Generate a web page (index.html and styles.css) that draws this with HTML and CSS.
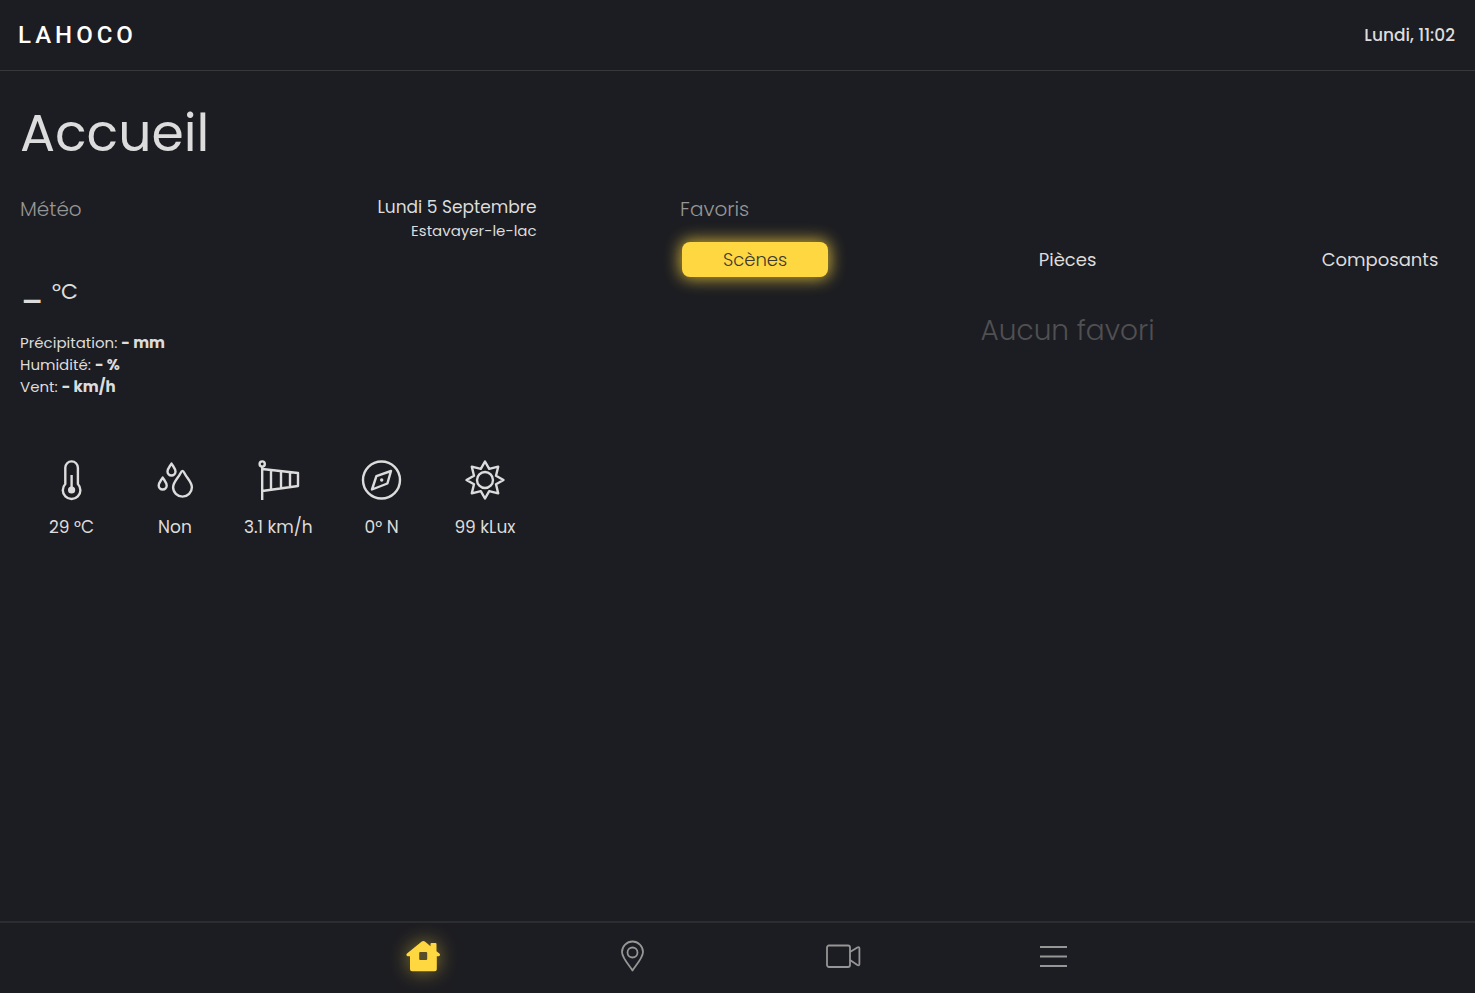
FILE: index.html
```html
<!DOCTYPE html>
<html lang="fr">
<head>
    <meta charset="UTF-8">
    <meta name="viewport" content="width=device-width, initial-scale=1.0">
    <title>Lahoco - Accueil</title>
    <link rel="stylesheet" href="styles.css">
</head>
<body>
<header class="topbar">
    <div class="logo">LAHOCO</div>
    <div class="clock">Lundi, 11:02</div>
</header>

<main>
    <h1>Accueil</h1>

    <div class="columns">
        <section class="weather">
            <div class="weather-head">
                <h2>Météo</h2>
                <div class="place">
                    <p class="date">Lundi 5 Septembre</p>
                    <p class="city">Estavayer-le-lac</p>
                </div>
            </div>

            <div class="temperature">
                <span class="degrees">_</span>
                <span class="unit">°C</span>
            </div>

            <ul class="details">
                <li>Précipitation: <b>- mm</b></li>
                <li>Humidité: <b>- %</b></li>
                <li>Vent: <b>- km/h</b></li>
            </ul>

            <div class="sensors">
                <div class="sensor">
                    <svg viewBox="0 0 40 40">
                        <path d="M13.3 24V7.700a6.300 6.300 0 0 1 12.600 0V24a8.800 8.800 0 1 1-12.600 0z"/>
                        <path d="M19.600 15v15"/>
                        <circle class="full" cx="19.600" cy="30" r="3.600"/>
                    </svg>
                    <span>29 °C</span>
                </div>
                <div class="sensor">
                    <svg viewBox="0 0 40 40">
                        <path d="M16.500 3.500c2 3.300 4 5.500 4 8a4 4 0 0 1-8 0c0-2.500 2-4.700 4-8z"/>
                        <path d="M7.700 17.500c2 3.300 4 5.500 4 8a4 4 0 0 1-8 0c0-2.500 2-4.700 4-8z"/>
                        <path d="M27.500 11c-1 0-1.500 1.200-2 2.200-2.500 5-7.400 9-7.400 14a9.400 9.400 0 0 0 18.800 0c0-5-4.900-9-7.400-14-.5-1-1-2.200-2-2.200z"/>
                    </svg>
                    <span>Non</span>
                </div>
                <div class="sensor">
                    <svg viewBox="0 0 40 40">
                        <circle cx="4.200" cy="4" r="2.600"/>
                        <path d="M4.200 6.600V40M4.200 9L40 13v13L4.200 31M13 10v20M23 11.200v17.300M32 12.200v15"/>
                    </svg>
                    <span>3.1 km/h</span>
                </div>
                <div class="sensor">
                    <svg viewBox="0 0 40 40">
                        <circle cx="19.500" cy="20" r="18.500"/>
                        <path d="M29 11l-3.600 12.500L10 29.500l4.400-13.300z"/>
                        <circle class="full" cx="19.700" cy="20" r="1.700"/>
                    </svg>
                    <span>0° N</span>
                </div>
                <div class="sensor">
                    <svg viewBox="0 0 40 40">
                        <circle cx="20" cy="20" r="8"/>
                        <path d="M20 1.500l4.200 7.400 9-2.200-2.200 9 7.500 4.300-7.500 4.300 2.200 9-9-2.200-4.200 7.400-4.200-7.400-9 2.200 2.200-9L1.500 20 9 15.700l-2.200-9 9 2.200z"/>
                    </svg>
                    <span>99 kLux</span>
                </div>
            </div>
        </section>

        <section class="favorites">
            <h2>Favoris</h2>
            <div class="tabs">
                <button type="button" class="tab active">Scènes</button>
                <button type="button" class="tab">Pièces</button>
                <button type="button" class="tab">Composants</button>
            </div>
            <p class="empty">Aucun favori</p>
        </section>
    </div>
</main>

<nav class="bottombar">
    <div class="links">
        <a href="#accueil" class="active" aria-label="Accueil">
            <svg viewBox="0 0 36 36">
                <path class="house" d="M17.800 3.600a2.300 2.300 0 0 1 3.100 0l5.600 4.600V6a1 1 0 0 1 1-1h4a1 1 0 0 1 1 1v7.200l2.900 2.400a1.500 1.500 0 0 1-1 2.700h-1.600v13a2 2 0 0 1-2 2H8a2 2 0 0 1-2-2v-13H4a1.500 1.500 0 0 1-1-2.700z"/>
                <rect class="window" x="15.200" y="14" width="8" height="8" rx="1"/>
            </svg>
        </a>
        <a href="#pieces" aria-label="Pièces">
            <svg viewBox="0 0 36 36">
                <path d="M18.500 32.500c-2-3.500-10.500-12.500-10.500-18.500a10.500 10.500 0 0 1 21 0C29 20 20.500 29 18.500 32.500z"/>
                <circle cx="18.500" cy="14.500" r="5"/>
            </svg>
        </a>
        <a href="#cameras" aria-label="Caméras">
            <svg viewBox="0 0 36 36">
                <rect x="2" y="7.500" width="23" height="21.500" rx="2"/>
                <path d="M25 14l7.400-4.500q2-1 2 1v15.500q0 2-2 1L25 22"/>
            </svg>
        </a>
        <a href="#menu" aria-label="Menu">
            <svg viewBox="0 0 36 36">
                <path d="M5 9h27M5 18.500h27M5 28h27"/>
            </svg>
        </a>
    </div>
</nav>
</body>
</html>
```
FILE: styles.css
```css
* {
    box-sizing: border-box;
}

body {
    min-height: 100vh;
    margin: 0;
    display: flex;
    flex-direction: column;
    background-color: #1c1d22;
    color: #dcdcdc;
    font-family: Poppins, Inter, sans-serif;
    font-size: 18px;
}

h1, h2, p, ul {
    margin: 0;
    padding: 0;
}

/* Top bar */
.topbar {
    display: flex;
    justify-content: space-between;
    align-items: center;
    height: 71px;
    padding: 0 20px 0 18px;
    border-bottom: 1px solid #383838;
}

.logo {
    font-family: Roboto, sans-serif;
    font-size: 24px;
    font-weight: 500;
    letter-spacing: 4px;
    color: #fff;
}

.clock {
    font-size: 17px;
    font-weight: 500;
}

main {
    flex: 1;
    padding: 28px 20px;
}

h1 {
    font-size: 52px;
    font-weight: 400;
    line-height: 68px;
}

h2 {
    font-size: 20px;
    font-weight: 300;
    line-height: 24px;
    color: #969696;
}

.columns {
    display: grid;
    grid-template-columns: 36% 54%;
    justify-content: space-between;
    margin-top: 30px;
}

/* Weather */
.weather-head {
    display: flex;
    justify-content: space-between;
}

.place {
    text-align: right;
}

.date {
    font-size: 17px;
    line-height: 20px;
}

.city {
    font-size: 15px;
    line-height: 28px;
}

.temperature {
    display: flex;
    align-items: baseline;
    gap: 8px;
    margin-top: 22px;
    line-height: 44px;
}

.degrees {
    font-size: 30px;
    font-weight: 500;
}

.unit {
    font-size: 22px;
}

.details {
    margin-top: 18px;
    list-style: none;
    font-size: 15px;
    line-height: 22px;
}

.sensors {
    display: grid;
    grid-template-columns: repeat(5, 1fr);
    margin-top: 62px;
}

.sensor {
    display: flex;
    flex-direction: column;
    align-items: center;
    gap: 16px;
    font-size: 17px;
    line-height: 22px;
}

svg {
    display: block;
    fill: none;
    stroke: #dcdcdc;
    stroke-width: 2.4;
    stroke-linejoin: round;
    overflow: visible;
}

.sensor svg {
    width: 40px;
    height: 40px;
}

.full {
    fill: #dcdcdc;
    stroke: none;
}

/* Favorites */
.tabs {
    display: flex;
    justify-content: space-between;
    margin: 21px 2px 0;
}

.tab {
    width: 146px;
    height: 35px;
    padding: 0;
    border: none;
    border-radius: 8px;
    background: none;
    color: #dcdcdc;
    font-family: inherit;
    font-size: 18px;
    cursor: pointer;
}

.tab.active {
    background-color: #ffd740;
    color: #3c3a30;
    font-weight: 300;
    box-shadow: 0 0 16px 2px rgba(255, 215, 64, 0.75);
}

.empty {
    margin-top: 36px;
    text-align: center;
    font-size: 28px;
    font-weight: 300;
    line-height: 36px;
    color: #505052;
}

/* Bottom bar */
.bottombar {
    height: 72px;
    border-top: 2px solid #2d2d30;
}

.links {
    display: grid;
    grid-template-columns: repeat(4, 1fr);
    width: 57%;
    height: 66px;
    margin: 0 auto;
}

.links a {
    display: flex;
    align-items: center;
    justify-content: center;
}

.links svg {
    width: 36px;
    height: 36px;
    stroke: #969696;
    stroke-width: 1.8;
}

.links .active svg {
    filter: drop-shadow(0 0 10px rgba(255, 215, 64, 0.5));
}

.house {
    fill: #ffd740;
    stroke: none;
}

.window {
    fill: #574d2a;
    stroke: none;
}
```
